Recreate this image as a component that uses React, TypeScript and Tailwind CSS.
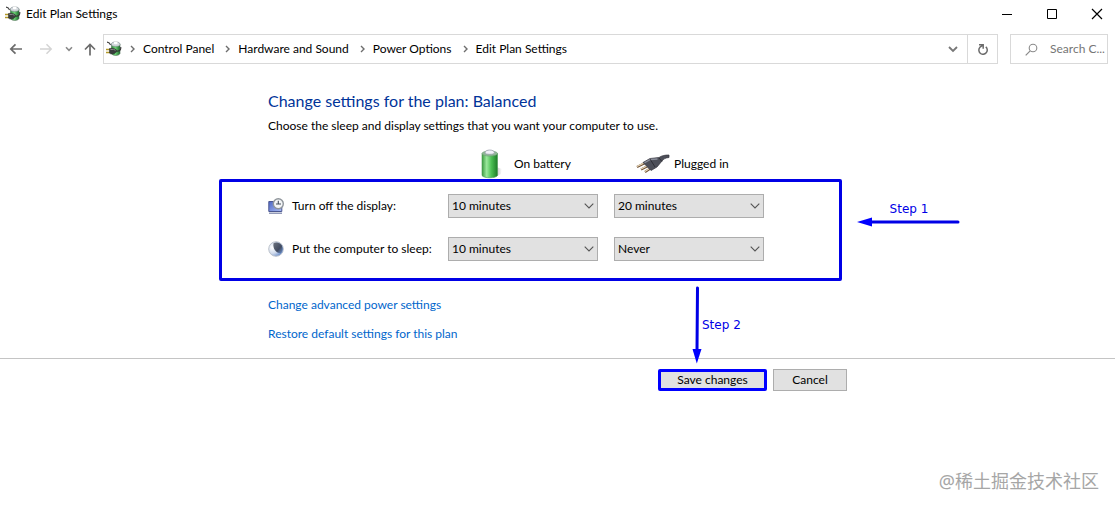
import React from "react";

function PowerIcon() {
  return (
    <svg width="16" height="16" viewBox="0 0 16 16" aria-hidden="true">
      <defs>
        <linearGradient id="cell" x1="0" y1="0" x2="1" y2="0">
          <stop offset="0" stopColor="#2f8f3c" />
          <stop offset="0.45" stopColor="#6fd277" />
          <stop offset="1" stopColor="#1b6a2a" />
        </linearGradient>
      </defs>
      <path d="M1 1.200c1.200 0 2.600.800 3.600 2.800" fill="none" stroke="#444" strokeWidth="1.200" />
      <path d="M5.500 3v9.500c1 2.600 7.500 2.600 8.500 0V3z" fill="url(#cell)" stroke="#4d6b54" strokeWidth=".6" />
      <ellipse cx="9.700" cy="3.200" rx="4.300" ry="2.200" fill="#d5dade" stroke="#7b868c" strokeWidth=".6" />
      <ellipse cx="9.700" cy="2" rx="2" ry="1.200" fill="#fff" />
      <path d="M0 8.500h4M0 11.500h4" stroke="#b39a2c" strokeWidth="1.300" />
      <path d="M3.500 7.500l3.500-.3 3 1.300 1 1.800-2.500 2.200-3.500.6-1.500-1z" fill="#3a3c3d" stroke="#222" strokeWidth=".5" />
      <path d="M4.500 8.500l3-.2 2 1" stroke="#8a8d8f" fill="none" />
      <path d="M11 10c3 .5 4-1.500 3.800-4" fill="none" stroke="#333" strokeWidth="1.100" />
    </svg>
  );
}

function BatteryIcon() {
  return (
    <svg width="24" height="30" viewBox="0 0 24 30" aria-hidden="true">
      <defs>
        <linearGradient id="battery" x1="0" y1="0" x2="1" y2="0">
          <stop offset="0" stopColor="#3c9b42" />
          <stop offset="0.3" stopColor="#9be89c" />
          <stop offset="0.6" stopColor="#4cc054" />
          <stop offset="1" stopColor="#1d7d28" />
        </linearGradient>
        <linearGradient id="floor" x1="0" y1="0" x2="1" y2="0">
          <stop offset="0" stopColor="#999" />
          <stop offset="1" stopColor="#fff" />
        </linearGradient>
      </defs>
      <path d="M16 18l6 2-1 5-6 3z" fill="url(#floor)" opacity=".7" />
      <path d="M2 4.500v22c1.500 3 14 3 15.500 0v-22z" fill="url(#battery)" stroke="#4b9a55" strokeWidth=".6" />
      <ellipse cx="9.750" cy="4.500" rx="7.750" ry="2.600" fill="#8fb895" stroke="#6f9a78" strokeWidth=".6" />
      <path d="M5 4c0-4 9.500-4 9.500 0 0 1.700-9.500 1.700-9.500 0z" fill="#f1f1f8" stroke="#9496a6" strokeWidth=".7" />
    </svg>
  );
}

function PlugIcon() {
  return (
    <svg width="34" height="20" viewBox="0 0 34 20" aria-hidden="true">
      <path d="M1 13l8-4M5 15.500l8-4M9 18l6-4" stroke="#6d4f36" strokeWidth="2.200" />
      <path d="M1 12.500l8-4M5 15l8-4M9 17.500l6-4" stroke="#e9d8b6" strokeWidth="1.100" />
      <path d="M7 8.500l7-4 9-1c3-2 6-2.500 10-2.500v2.500c-4 .3-5 1.500-7 3.500l-5 6-6 3.500z" fill="#4d4f59" stroke="#33343c" strokeWidth=".7" />
      <path d="M8.500 8.800l6-3.300 7-.5" stroke="#8b8e9b" strokeWidth="1.300" fill="none" />
      <path d="M14 5l5 8M23 4l3 3.500" stroke="#26262c" strokeWidth=".8" />
    </svg>
  );
}

function DisplayIcon() {
  return (
    <svg width="16" height="16" viewBox="0 0 16 16" aria-hidden="true">
      <defs>
        <linearGradient id="screen" x1="0" y1="0" x2="1" y2="1">
          <stop offset="0" stopColor="#4c66c4" />
          <stop offset="1" stopColor="#a9bcf5" />
        </linearGradient>
      </defs>
      <path d="M.8 3.500h13v10h-13z" fill="url(#screen)" stroke="#4a5690" />
      <path d="M1 15.200h13" stroke="#7882a8" strokeWidth="1.200" />
      <circle cx="10.300" cy="5.700" r="5" fill="#f3f5f7" stroke="#8f959b" strokeWidth="1.400" />
      <path d="M10.300 2.700v3.300h2.700M8 6h2" fill="none" stroke="#46505c" strokeWidth="1.100" />
    </svg>
  );
}

function MoonIcon() {
  return (
    <svg width="16" height="16" viewBox="0 0 16 16" aria-hidden="true">
      <defs>
        <radialGradient id="moon" cx=".25" cy=".4" r=".8">
          <stop offset="0" stopColor="#fff" />
          <stop offset=".5" stopColor="#cfdaec" />
          <stop offset="1" stopColor="#4d78c4" />
        </radialGradient>
        <linearGradient id="night" x1="0" y1="0" x2="1" y2="1">
          <stop offset="0" stopColor="#6d737e" />
          <stop offset=".6" stopColor="#414b60" />
          <stop offset="1" stopColor="#6f94d4" />
        </linearGradient>
      </defs>
      <circle cx="8" cy="8" r="7.300" fill="url(#moon)" stroke="#bcc2cb" strokeWidth="1" />
      <path d="M5.500 2.200C8 .8 12 1.500 13.800 4.500c1.500 3 .8 6-1 7.800C8 12 4.500 7.500 5.500 2.200z" fill="url(#night)" />
    </svg>
  );
}

function Crumb({ label }: { label: string }) {
  return (
    <li className="flex items-center">
      <svg width="8" height="10" viewBox="0 0 8 10" className="mr-[6px]" aria-hidden="true">
        <path d="M2 2l3 3-3 3" fill="none" stroke="#6d6d6d" strokeWidth="1.400" />
      </svg>
      <a href="#" className="whitespace-nowrap">{label}</a>
    </li>
  );
}

function TimeSelect({ label, value }: { label: string; value: string }) {
  return (
    <div className="relative w-[150px]">
      <select
        aria-label={label}
        defaultValue={value}
        className="block h-6 w-full appearance-none border border-[#adadad] bg-[#e1e1e1] pr-6 pl-[3px] text-xs text-black"
      >
        <option>10 minutes</option>
        <option>20 minutes</option>
        <option>Never</option>
      </select>
      <svg width="10" height="6" viewBox="0 0 10 6" className="pointer-events-none absolute top-[9px] right-1" aria-hidden="true">
        <path d="M.7.7L5 5 9.300.7" fill="none" stroke="#555" strokeWidth="1.100" />
      </svg>
    </div>
  );
}

function SettingRow({ icon, label, battery, plugged }: { icon: React.ReactNode; label: string; battery: string; plugged: string }) {
  return (
    <div className="flex items-center">
      <div className="flex w-[180px] items-center gap-2 whitespace-nowrap">
        {icon}
        <span>{label}</span>
      </div>
      <div className="flex gap-4">
        <TimeSelect label={label + " on battery"} value={battery} />
        <TimeSelect label={label + " plugged in"} value={plugged} />
      </div>
    </div>
  );
}

export default function App() {
  return (
    <div className="relative flex min-h-screen flex-col bg-white font-['Lato','Noto_Sans',sans-serif] text-xs text-black">
      <header className="flex h-[27px] items-center justify-between pr-3 pl-[5px]">
        <div className="flex items-center gap-[5px]">
          <PowerIcon />
          <h1>Edit Plan Settings</h1>
        </div>
        <div className="flex gap-[33px]">
          <button aria-label="Minimize">
            <svg width="12" height="12" viewBox="0 0 12 12"><path d="M1 6.500h10" stroke="#000" /></svg>
          </button>
          <button aria-label="Maximize">
            <svg width="12" height="12" viewBox="0 0 12 12"><path d="M1.500 1.500h9v9h-9z" fill="none" stroke="#000" /></svg>
          </button>
          <button aria-label="Close">
            <svg width="12" height="12" viewBox="0 0 12 12"><path d="M1 1l10 10M11 1L1 11" stroke="#000" strokeWidth="1.200" /></svg>
          </button>
        </div>
      </header>

      <nav className="flex items-center gap-3 pt-[7px] pr-[7px] pl-[9px]">
        <div className="flex min-w-0 grow items-center">
          <div className="flex w-[94px] shrink-0 items-center">
            <button aria-label="Back">
              <svg width="14" height="14" viewBox="0 0 14 14"><path d="M13 7H2M6.500 2.300L1.800 7l4.700 4.700" fill="none" stroke="#6b6b6b" strokeWidth="1.700" /></svg>
            </button>
            <button aria-label="Forward" className="ml-4">
              <svg width="14" height="14" viewBox="0 0 14 14"><path d="M1 7h11M7.500 2.300L12.200 7l-4.700 4.700" fill="none" stroke="#d4d4d4" strokeWidth="1.500" /></svg>
            </button>
            <button aria-label="Recent locations" className="ml-3">
              <svg width="8" height="8" viewBox="0 0 8 8"><path d="M1 2.300l3 3 3-3" fill="none" stroke="#8a8a8a" strokeWidth="1.600" /></svg>
            </button>
            <button aria-label="Up" className="ml-[10px]">
              <svg width="14" height="14" viewBox="0 0 14 14"><path d="M7 13.500V3M2 7.500l5-5 5 5" fill="none" stroke="#6b6b6b" strokeWidth="1.700" /></svg>
            </button>
          </div>
          <div className="flex h-[30px] min-w-0 grow items-center border border-[#d9d9d9] pl-[2px]">
            <PowerIcon />
            <ol className="ml-[7px] flex min-w-0 grow items-center gap-[10px]">
              <Crumb label="Control Panel" />
              <Crumb label="Hardware and Sound" />
              <Crumb label="Power Options" />
              <Crumb label="Edit Plan Settings" />
            </ol>
            <button aria-label="Previous locations" className="flex h-full w-7 items-center justify-center">
              <svg width="10" height="8" viewBox="0 0 10 8"><path d="M1 2l4 4 4-4" fill="none" stroke="#777" strokeWidth="1.800" /></svg>
            </button>
            <button aria-label="Refresh" className="flex h-full w-[30px] items-center justify-center border-l border-[#d9d9d9]">
              <svg width="12" height="12" viewBox="0 0 12 12"><path d="M8.800 3.900A4.200 4.200 0 1 1 3 4.200L6 2.200M2 1.800h4.200v4" fill="none" stroke="#6b6b6b" strokeWidth="1.500" /></svg>
            </button>
          </div>
        </div>
        <label className="flex h-[30px] w-[98px] shrink-0 items-center gap-3 border border-[#d9d9d9] pl-[14px]">
          <svg width="13" height="13" viewBox="0 0 13 13" className="shrink-0" aria-hidden="true">
            <circle cx="8" cy="5" r="3.800" fill="none" stroke="#8a8a8a" strokeWidth="1.100" />
            <path d="M5.200 7.800L.7 12.300" stroke="#8a8a8a" strokeWidth="1.200" />
          </svg>
          <input aria-label="Search Control Panel" placeholder="Search C..." className="w-full min-w-0 outline-none placeholder:text-[#757575]" />
        </label>
      </nav>

      <main className="pt-[25px]">
        <section className="ml-[219px] w-[623px] max-w-full">
          <div className="pl-[49px]">
            <h2 className="text-base leading-6 text-[#003399]">Change settings for the plan: Balanced</h2>
            <p className="mt-[3px] leading-5">Choose the sleep and display settings that you want your computer to use.</p>
            <div className="mt-3 flex h-[31px] items-center pl-[212px]">
              <div className="flex w-[156px] items-center gap-[10px]">
                <BatteryIcon />
                <span>On battery</span>
              </div>
              <div className="flex items-center gap-1">
                <PlugIcon />
                <span>Plugged in</span>
              </div>
            </div>
          </div>
          <div className="relative flex h-[102px] flex-col gap-[19px] rounded-[2px] border-3 border-[#0000e6] pt-3 pl-[46px]">
            <SettingRow icon={<DisplayIcon />} label="Turn off the display:" battery="10 minutes" plugged="20 minutes" />
            <SettingRow icon={<MoonIcon />} label="Put the computer to sleep:" battery="10 minutes" plugged="Never" />
            <div className="absolute top-[19px] left-[635px] flex w-[104px] flex-col items-center font-['DejaVu_Sans','Noto_Sans',sans-serif] text-[#0000e6]">
              <span className="leading-4">Step 1</span>
              <svg width="104" height="10" viewBox="0 0 104 10" aria-hidden="true">
                <path d="M14 5h87" stroke="#0000e6" strokeWidth="3" strokeLinecap="round" />
                <path d="M0 5l15-4.500v9z" fill="#0000ff" />
              </svg>
            </div>
            <div className="absolute top-[104px] left-[470px] flex items-center font-['DejaVu_Sans','Noto_Sans',sans-serif] text-[#0000e6]">
              <svg width="10" height="78" viewBox="0 0 10 78" aria-hidden="true">
                <path d="M5.500 2L5 64" stroke="#0000e6" strokeWidth="3" strokeLinecap="round" />
                <path d="M.500 63h9L4.800 77.500z" fill="#0000ff" />
              </svg>
              <span className="whitespace-nowrap">Step 2</span>
            </div>
          </div>
          <div className="flex flex-col items-start gap-[9px] pt-[14px] pb-[14px] pl-[49px] leading-5 text-[#0066cc]">
            <a href="#">Change advanced power settings</a>
            <a href="#">Restore default settings for this plan</a>
          </div>
        </section>
        <div className="border-t border-[#c4c4c4] pt-[10px]">
          <div className="ml-[658px] flex gap-[6px]">
            <button className="h-[22px] w-[109px] rounded-[2px] border-3 border-[#0000ff] bg-[#e1e1e1] leading-4">Save changes</button>
            <button className="h-[22px] w-[74px] border border-[#adadad] bg-[#e1e1e1] leading-4">Cancel</button>
          </div>
        </div>
      </main>

      <p className="absolute right-4 bottom-[13px] font-['Noto_Sans','Noto_Sans_CJK_SC',sans-serif] text-lg leading-[26px] text-[#a6a6a6]">@稀土掘金技术社区</p>
    </div>
  );
}
